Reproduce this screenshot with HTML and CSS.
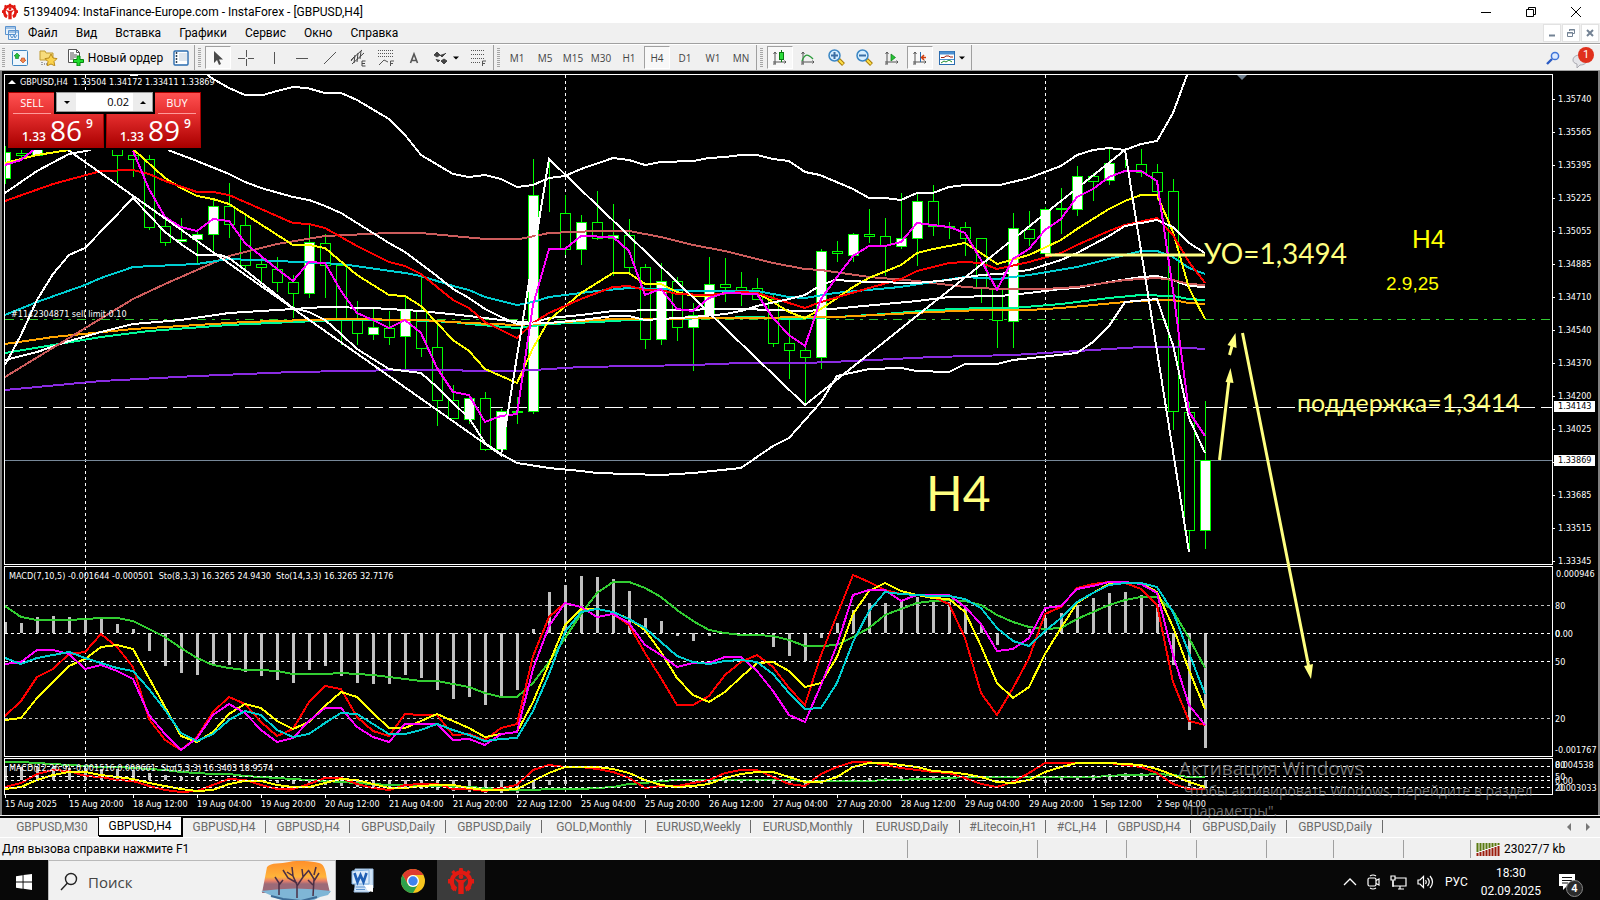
FILE: index.html
```html
<!DOCTYPE html>
<html lang="ru">
<head>
<meta charset="utf-8">
<title>51394094: InstaFinance-Europe.com - InstaForex - [GBPUSD,H4]</title>
<link rel="stylesheet" href="styles.css">
</head>
<body>
<svg class="defs" aria-hidden="true">
  <symbol id="gear" viewBox="0 0 24 24">
    <g fill="currentColor">
      <path d="M10.500 0h3l.6 3h-4.200zM3 3.600l2.400-1.800 2.400 2.700-2.700 2zM21 3.600l-2.400-1.800-2.400 2.700 2.700 2zM0 10.200h3.500v4H0zM24 10.200h-3.500v4H24zM2.400 18.500l2.600-2.200 2.500 2.800-2.400 2.400zM21.600 18.500L19 16.300l-2.500 2.800 2.400 2.400z"/>
      <path d="M12 2a10.500 10.500 0 0 0-4.800 19.800l1.200-4A6.500 6.500 0 0 1 5.500 12.500a6.500 6.500 0 0 1 13 0 6.500 6.500 0 0 1-2.900 5.300l1.200 4A10.500 10.500 0 0 0 12 2z"/>
      <circle cx="12" cy="8" r="2.200"/>
      <path d="M5.500 9.500l5 1.500h3l5-1.500-4 4.300V24h-5V13.800z"/>
    </g>
  </symbol>
  <symbol id="axes" viewBox="0 0 16 16"><path d="M3 2v12M1 12h13M1.500 4L3 2l1.500 2M12.500 10.500L14 12l-1.500 1.500M1 14h3" fill="none" stroke="#555"/></symbol>
</svg>

<header class="titlebar">
  <svg class="app-icon" viewBox="0 0 24 24"><use href="#gear"/></svg>
  <h1 class="title">51394094: InstaFinance-Europe.com - InstaForex - [GBPUSD,H4]</h1>
  <div class="window-controls">
    <button aria-label="Свернуть"><svg width="12" height="12"><path d="M1 6.500h10" stroke="#000"/></svg></button>
    <button aria-label="Восстановить"><svg width="12" height="12" fill="none" stroke="#000"><path d="M1.500 3.500h7v7h-7zM3.500 3.500v-2h7v7h-2"/></svg></button>
    <button aria-label="Закрыть"><svg width="12" height="12"><path d="M1 1l10 10M11 1L1 11" stroke="#000"/></svg></button>
  </div>
</header>

<nav class="menubar">
  <svg class="menu-icon" width="16" height="16" fill="#e8f2fb" stroke="#5a93cf"><path d="M1.500 1.500h10v8h-10zM4.500 5.500h10v9h-10z"/><path d="M1 3h10M5 7h10" stroke-width="1"/><path d="M6 10l2 3 2-3 1 3 2-3" fill="none"/></svg>
  <button>Файл</button><button>Вид</button><button>Вставка</button><button>Графики</button><button>Сервис</button><button>Окно</button><button>Справка</button>
  <div class="mdi-controls">
    <button aria-label="Свернуть окно"><svg width="10" height="10"><path d="M2 7.500h6" stroke="#738294" stroke-width="2"/></svg></button>
    <button aria-label="Восстановить окно"><svg width="10" height="10" fill="none" stroke="#738294"><path d="M1.500 4.500h5v4h-5zM3.500 3V1.500h5v4H7M1 5h6M3 2h6"/></svg></button>
    <button aria-label="Закрыть окно"><svg width="10" height="10"><path d="M2 2l6 6M8 2L2 8" stroke="#738294" stroke-width="2"/></svg></button>
  </div>
</nav>

<div class="toolbar">
  <div class="group group-first">
    <button aria-label="Новый график"><svg width="16" height="16"><rect x=".5" y=".5" width="15" height="15" rx="1" fill="#eef7fd" stroke="#3f86c0"/><path d="M5 3l3 3H6.500v2.500h-3V6H2z" fill="#25c43a" stroke="#0c7a1c" stroke-width=".6"/><path d="M11 13L8 10h1.500V8h3v2H14z" fill="#f08a4c" stroke="#c03c10" stroke-width=".6"/></svg></button>
    <button aria-label="Профили"><svg width="19" height="17"><path d="M1 2h5l1 2h7v7H1z" fill="#f7dc7c" stroke="#c19c33"/><path d="M3 13v3M5 15h4" stroke="#555" stroke-dasharray="1 1"/><path d="M12 5l2 4 4 .6-3 3 .8 4.200L12 15l-3.800 1.800.8-4.200-3-3L10 9z" fill="#fbd34d" stroke="#b98a1c"/></svg></button>
    <button class="new-order"><svg width="17" height="17"><path d="M1.500.5h8l3 3v10h-11z" fill="#fff" stroke="#555"/><path d="M9.500.5v3h3M3 4h4M3 6h7M3 8h6M3 10h4" fill="none" stroke="#555"/><path d="M10 7h3v3.500h3.500v3H13V17h-3v-3.500H6.500v-3H10z" fill="#1fdc2c" stroke="#07850f"/></svg>Новый ордер</button>
    <button class="narrow" aria-label="Обзор рынка"><svg width="16" height="16"><rect x="1" y="1" width="14" height="14" rx="1" fill="#fff" stroke="#2a6cb0" stroke-width="1.400"/><path d="M3.500 2v12" stroke="#345" stroke-width="1.500" stroke-dasharray="2 1"/><path d="M6 4h8M6 6h8M6 8h8M6 10h8" stroke="#bcd"/></svg></button>
  </div>
  <div class="group">
    <button class="pressed" aria-label="Курсор"><svg width="16" height="16"><path d="M4 1v12l3-3 2 5 2-1-2-4.500h4z" fill="#4a4a4a"/></svg></button>
    <button aria-label="Перекрестие"><svg width="16" height="16"><path d="M8.500 0v7M8.500 9v7M0 8.500h7M10 8.500h6" stroke="#555"/></svg></button>
    <button aria-label="Вертикальная линия"><svg width="16" height="16"><path d="M8.500 2v12" stroke="#555"/></svg></button>
    <button aria-label="Горизонтальная линия"><svg width="16" height="16"><path d="M2 8.500h12" stroke="#555"/></svg></button>
    <button aria-label="Трендовая линия"><svg width="16" height="16"><path d="M2 14L14 2" stroke="#555"/></svg></button>
    <button aria-label="Канал"><svg width="17" height="18"><path d="M1 11L12 1M2 15L14 4M4 14l1-8M7 13l1-9M10 10l1-8M1 12l3-4" stroke="#444" fill="none"/><path d="M15.500 12h-3.500v5h3.500M12 14.500h3" fill="none" stroke="#444"/></svg></button>
    <button aria-label="Фибоначчи"><svg width="17" height="18"><path d="M0 1.500h16M0 4.500h16M0 7.500h16" stroke="#555" stroke-dasharray="1 1"/><path d="M1 16l5-5 4 2M12.500 17v-5H16M12.500 14.500H15" fill="none" stroke="#555"/></svg></button>
    <button aria-label="Текст"><svg width="16" height="16"><path d="M4.500 13L8 4l3.500 9M5.500 10.500h5" fill="none" stroke="#555" stroke-width="1.600"/></svg></button>
    <button class="wide" aria-label="Стрелки"><svg width="26" height="16"><path d="M1 5l3-3 3 3-3 2zM8 11l3-2 3 2-3 3zM3 9l2 3 2-2M7 5l2 2 4-4" fill="#444" stroke="#444"/><path d="M20 6.500h6l-3 3z" fill="#000"/></svg></button>
    <button aria-label="Уровни"><svg width="17" height="18"><path d="M1 1.500h14M1 5.500h14M1 9.500h14M1 13.500h9" stroke="#555" stroke-dasharray="1 1"/><path d="M12.500 17v-5H16M12.500 14.500H15" fill="none" stroke="#555"/></svg></button>
  </div>
  <div class="group timeframes">
    <button>M1</button><button>M5</button><button>M15</button><button>M30</button><button>H1</button><button class="pressed">H4</button><button>D1</button><button>W1</button><button>MN</button>
  </div>
  <div class="group">
    <button class="pressed" aria-label="Свечи"><svg width="16" height="16"><use href="#axes"/><path d="M9.500 0v12" stroke="#0a7a12"/><rect x="7.500" y="2.500" width="4" height="7" fill="#2bdc3a" stroke="#0a7a12"/></svg></button>
    <button aria-label="Линия"><svg width="16" height="16"><use href="#axes"/><path d="M2 11c3-8 6-7 11-2" fill="none" stroke="#2b9b3b" stroke-width="1.400"/></svg></button>
    <button aria-label="Увеличить"><svg width="17" height="17"><path d="M10 10l5.500 5.500" stroke="#a87c08" stroke-width="4"/><path d="M11 11l4 4" stroke="#ffe14a" stroke-width="2"/><circle cx="6.500" cy="6.500" r="5.500" fill="#d6efff" stroke="#3a86c4" stroke-width="1.500"/><path d="M3 6.500h7M6.500 3v7" stroke="#3a6fa4" stroke-width="2"/></svg></button>
    <button aria-label="Уменьшить"><svg width="17" height="17"><path d="M10 10l5.500 5.500" stroke="#a87c08" stroke-width="4"/><path d="M11 11l4 4" stroke="#ffe14a" stroke-width="2"/><circle cx="6.500" cy="6.500" r="5.500" fill="#d6efff" stroke="#3a86c4" stroke-width="1.500"/><path d="M3 6.500h7" stroke="#3a6fa4" stroke-width="2"/></svg></button>
    <button aria-label="Автопрокрутка"><svg width="16" height="16"><use href="#axes"/><path d="M7 4l4.500 3.500L7 11z" fill="#27c437" stroke="#0a7a12" stroke-width=".7"/></svg></button>
    <button class="pressed" aria-label="Сдвиг графика"><svg width="16" height="16"><use href="#axes"/><path d="M8.500 2v10" stroke="#2a6cb0"/><path d="M14 7.500H9.500M12 5L9.500 7.500 12 10" stroke="#d04010" fill="none" stroke-width="1.500"/></svg></button>
    <button class="wide" aria-label="Шаблоны"><svg width="26" height="16"><rect x=".5" y="1.500" width="15" height="13" fill="#fff" stroke="#2a6cb0"/><path d="M1 3h14" stroke="#4a8fd0" stroke-width="3"/><path d="M1 9.500h14" stroke="#4a8fd0"/><path d="M2 7.500h3l2-1.500h3l1 1h3" fill="none" stroke="#a02010"/><path d="M2 13l3-2 2 1 3-2 3 2" fill="none" stroke="#209030"/><path d="M20 6.500h6l-3 3z"/></svg></button>
  </div>
  <div class="toolbar-end">
    <button aria-label="Поиск"><svg width="14" height="14" fill="none"><circle cx="9" cy="5" r="3.600" stroke="#3f74d8" stroke-width="1.500" fill="#dceaff"/><path d="M6 8l-5 5" stroke="#2b5cc4" stroke-width="2.400"/></svg></button>
    <button class="chat" aria-label="Сообщения: 1"><svg width="16" height="15"><path d="M8 1c4 0 7 2 7 5s-3 5-7 5l-3 3v-4C2 9 1 8 1 6c0-3 3-5 7-5z" fill="#e4e4e8" stroke="#a9a9b0"/></svg><span class="count">1</span></button>
  </div>
</div>

<main class="chart">
  <svg class="plot" viewBox="4 74 1549 721" role="img" aria-label="График GBPUSD H4">
    <g id="plot" shape-rendering="crispEdges"></g>
    <g stroke="#ffff80" stroke-width="3" fill="#ffff80">
      <path d="M1045 255h160"/>
      <path d="M1219.500 460L1229 380M1229.500 355L1232 346M1242.500 333L1309 668"/>
      <path d="M1230.500 368l3 15-8-1zM1235.500 333l1 15-9-3zM1311 679l-7-13 9-2z" stroke="none"/>
    </g>
    <g class="notes">
      <text class="note-level" x="1204" y="264">УО=1,3494</text>
      <text class="note-support" x="1297" y="412">поддержка=1,3414</text>
      <text class="note-big" x="926" y="511">H4</text>
      <text class="note-frame" x="1412" y="248">H4</text>
      <text class="note-date" x="1386" y="290">2.9,25</text>
    </g>
    <path d="M1237 75h10l-5 5z" fill="#708090"/>
  </svg>

  <div class="axis">
    <ol class="prices">
      <li>1.35740</li><li>1.35565</li><li>1.35395</li><li>1.35225</li><li>1.35055</li><li>1.34885</li><li>1.34710</li><li>1.34540</li><li>1.34370</li><li>1.34200</li><li>1.34025</li><li class="hidden-price"></li><li>1.33685</li><li>1.33515</li><li>1.33345</li>
    </ol>
    <span class="tag tag-level">1.34143</span>
    <span class="tag tag-bid">1.33869</span>
    <span class="mark m1">0.000946</span><span class="mark m2">80</span><span class="mark m3">0.00</span><span class="mark m3">0</span><span class="mark m4">50</span><span class="mark m5">20</span><span class="mark m6">-0.001767</span>
    <span class="mark m7">0.004538</span><span class="mark m7">80</span><span class="mark m8">50</span><span class="mark m9">0.00</span><span class="mark m10">20</span><span class="mark m11">0.003033</span>
  </div>

  <ol class="times">
    <li>15 Aug 2025</li><li>15 Aug 20:00</li><li>18 Aug 12:00</li><li>19 Aug 04:00</li><li>19 Aug 20:00</li><li>20 Aug 12:00</li><li>21 Aug 04:00</li><li>21 Aug 20:00</li><li>22 Aug 12:00</li><li>25 Aug 04:00</li><li>25 Aug 20:00</li><li>26 Aug 12:00</li><li>27 Aug 04:00</li><li>27 Aug 20:00</li><li>28 Aug 12:00</li><li>29 Aug 04:00</li><li>29 Aug 20:00</li><li>1 Sep 12:00</li><li>2 Sep 04:00</li>
  </ol>

  <p class="caption caption-main"><svg class="tri" width="8" height="4"><path d="M0 4l4-4 4 4z" fill="#fff"/></svg>GBPUSD,H4 &nbsp;1.33504 1.34172 1.33411 1.33869</p>
  <p class="caption caption-order">#1142304871 sell limit 0.10</p>
  <p class="caption caption-macd">MACD(7,10,5) -0.001644 -0.000501 &nbsp;Sto(8,3,3) 16.3265 24.9430 &nbsp;Sto(14,3,3) 16.3265 32.7176</p>
  <p class="caption caption-macd2">MACD(12,26,9) -0.001516 0.000661 &nbsp;Sto(5,3,3) 16.3403 18.9574</p>

  <section class="trade" aria-label="Торговля">
    <button class="side sell"><span class="side-name">SELL</span><span class="quote"><small>1.33</small><b>86</b><sup>9</sup></span></button>
    <div class="volume"><button aria-label="Меньше"><svg width="6" height="3"><path d="M0 0h6L3 3z"/></svg></button><input aria-label="Объём" value="0.02"><button aria-label="Больше"><svg width="6" height="3"><path d="M0 3h6L3 0z"/></svg></button></div>
    <button class="side buy"><span class="side-name">BUY</span><span class="quote"><small>1.33</small><b>89</b><sup>9</sup></span></button>
  </section>
</main>

<nav class="tabs">
  <a href="#" class="t-m30">GBPUSD,M30</a><a href="#" class="t-h4 active">GBPUSD,H4</a><a href="#" class="t-h4">GBPUSD,H4</a><a href="#" class="t-h4">GBPUSD,H4</a><a href="#" class="t-daily">GBPUSD,Daily</a><a href="#" class="t-daily">GBPUSD,Daily</a><a href="#" class="t-gold">GOLD,Monthly</a><a href="#" class="t-weekly">EURUSD,Weekly</a><a href="#" class="t-monthly">EURUSD,Monthly</a><a href="#" class="t-daily">EURUSD,Daily</a><a href="#" class="t-h1">#Litecoin,H1</a><a href="#" class="t-cl">#CL,H4</a><a href="#" class="t-h4">GBPUSD,H4</a><a href="#" class="t-daily">GBPUSD,Daily</a><a href="#" class="t-daily">GBPUSD,Daily</a>
  <div class="tab-scroll"><button aria-label="Назад"><svg width="5" height="8"><path d="M4 0v8L0 4z" fill="#777"/></svg></button><button aria-label="Вперёд"><svg width="5" height="8"><path d="M0 0v8l4-4z" fill="#777"/></svg></button></div>
</nav>

<footer class="status">
  <span class="help">Для вызова справки нажмите F1</span>
  <span class="cell profile"></span><span class="cell date"></span><span class="cell"></span><span class="cell"></span><span class="cell low"></span><span class="cell"></span><span class="cell low"></span>
  <span class="cell traffic"><svg width="24" height="13"><path d="M1.500 0v9M4.500 0v8M7.500 0v7M10.500 0v6M13.500 0v5M16.500 0v4M19.500 0v3M22.500 0v2" stroke="#5a7a10" stroke-width="2"/><path d="M1.500 10v3M4.500 9v4M7.500 8v5M10.500 7v6M13.500 6v7M16.500 5v8M19.500 4v9M22.500 3v10" stroke="#9c1c0c" stroke-width="2"/></svg>23027/7 kb</span>
</footer>

<div class="taskbar">
  <button class="start" aria-label="Пуск"><svg width="16" height="16" fill="#fff"><path d="M0 2.200l6.600-.9v6.200H0zM7.500 1.100L16 0v7.500H7.500zM0 8.400h6.600v6.300L0 13.800zM7.500 8.400H16V16l-8.500-1.200z"/></svg></button>
  <label class="search">
    <svg width="18" height="20" fill="none" stroke="#222" stroke-width="1.400"><circle cx="11" cy="7" r="5.500"/><path d="M7.500 11L1 18"/></svg>
    <input type="text" placeholder="Поиск">
    <svg class="scene" width="70" height="42" viewBox="0 0 70 42">
      <defs><linearGradient id="sky" x2="0" y2="1"><stop offset="0" stop-color="#ff8f2a"/><stop offset=".5" stop-color="#ffb43a"/><stop offset=".62" stop-color="#e8806a"/><stop offset=".72" stop-color="#9c6a78"/></linearGradient></defs>
      <path d="M6 6C10 1 20 3 28 1s22-1 30 1c6 1 7 10 8 17l3 13H1z" fill="url(#sky)"/>
      <path d="M0 30q35-5 70 0l-3 4-8 2-8 4-20 1-14-3-8-4z" fill="#7fb6d6"/>
      <path d="M10 35l12 3 18 2 16-4" stroke="#3d6c96" stroke-width="2" fill="none"/>
      <path d="M36 37V24l-4-9-6-4M32 15l-1-9M36 25l6-9 6-7M42 16l-1-8M36 22L27 17l-5-8M18 34V22l-4-6M18 24l4-5M52 35l1-17-5-8M53 20l5-8M52 24l-5-5M53 14l2-8" stroke="#4b2f45" stroke-width="1.500" fill="none"/>
    </svg>
  </label>
  <button class="app word" aria-label="Word"><svg width="24" height="26"><path d="M4 1h18v19l-4 4H3l1-5z" fill="#cfe3f7" stroke="#9fc2e6"/><path d="M1 3l17-1v14H1z" fill="#dcebfa" stroke="#7fb0e0"/><path d="M3.500 5l3 9L9.500 7l3 7 3-9" fill="none" stroke="#1f5fb4" stroke-width="2.600"/><path d="M5 19h11M5 21.500h9" stroke="#5c93cf"/><path d="M13 17h9v7l-5-1z" fill="#fff"/></svg></button>
  <button class="app chrome" aria-label="Chrome"><svg width="24" height="26" viewBox="0 0 24 24"><circle cx="12" cy="12" r="12" fill="#f7c51e"/><path d="M1.600 6A12 12 0 0 1 22.400 6H12a6 6 0 0 0-5.200 9z" fill="#df3b2f"/><path d="M1.600 6A12 12 0 0 0 12 24l5.200-9A6 6 0 0 1 6.800 15z" fill="#2da04c"/><circle cx="12" cy="12" r="6" fill="#fff"/><circle cx="12" cy="12" r="4.700" fill="#3f82ee"/></svg></button>
  <button class="app current" aria-label="InstaForex"><svg width="26" height="28" viewBox="0 0 24 24"><use href="#gear"/></svg></button>
  <div class="tray">
    <button aria-label="Скрытые значки"><svg width="14" height="8"><path d="M1 7l6-6 6 6" fill="none" stroke="#fff" stroke-width="1.300"/></svg></button>
    <button aria-label="Камера"><svg width="13" height="16" fill="none" stroke="#fff" stroke-width="1.200"><rect x="1" y="4" width="8" height="8" rx="1.500"/><path d="M9 6.500l3-1.500v6L9 9.500M3 2q3-2 6 0M3 14q3 2 6 0"/></svg></button>
    <button aria-label="Сеть"><svg width="17" height="15" fill="none" stroke="#fff" stroke-width="1.200"><path d="M5 3h11v8H3V6M8 14h6M10 11v3"/><path d="M1 1h4v4H1zM3 5v7"/></svg></button>
    <button aria-label="Громкость"><svg width="17" height="14" fill="none" stroke="#fff" stroke-width="1.200"><path d="M1 5h2l3.500-3.500v11L3 9H1zM8.500 5q1.500 2 0 4M10.500 3q3.500 4 0 8M13 1q5 6 0 12"/></svg></button>
    <span class="lang">РУС</span>
    <time class="clock"><span>18:30</span><span>02.09.2025</span></time>
    <button class="notify" aria-label="Уведомления: 4"><svg width="17" height="17"><path d="M0 0h16v12H8l-4 4v-4H0z" fill="#fff"/><path d="M3 3.500h10M3 6.500h10M3 9h6" stroke="#111"/></svg><span class="badge">4</span></button>
  </div>
</div>

<aside class="watermark"><strong>Активация Windows</strong><span>Чтобы активировать Windows, перейдите в раздел "Параметры".</span></aside>
<script src="chart.js"></script>
</body>
</html>
```

FILE: styles.css
```css
* { box-sizing: border-box; }
body { margin: 0; min-height: 100vh; display: flex; flex-direction: column; background: #f0f0f0; color: #000; font: 12px/16px Roboto, "Open Sans", "Noto Sans", sans-serif; position: relative; overflow-x: hidden; }
button { border: 0; background: none; padding: 0; margin: 0; font: inherit; color: inherit; display: flex; align-items: center; justify-content: center; }
ol, p, h1 { margin: 0; padding: 0; list-style: none; }
svg { display: block; flex: none; }
.defs { position: absolute; width: 0; height: 0; }

.titlebar { display: flex; align-items: center; height: 23px; background: #fff; padding-left: 2px; }
.app-icon { width: 16px; height: 17px; color: #e21a12; }
.title { font-size: 12px; font-weight: 400; margin-left: 5px; }
.window-controls { margin-left: auto; margin-right: 2px; display: flex; }
.window-controls button { width: 45px; height: 20px; }

.menubar { display: flex; align-items: center; height: 21px; border-bottom: 1px solid #a0a0a0; padding: 0 1px 0 4px; }
.menu-icon { margin-right: 8px; }
.menubar > button { margin-right: 18px; }
.mdi-controls { margin-left: auto; display: flex; gap: 1px; }
.mdi-controls button { width: 18px; height: 18px; background: #fff; border: 1px solid #e2e2e2; }

.toolbar { display: flex; align-items: center; height: 27px; border-top: 1px solid #fff; border-bottom: 1px solid #a0a0a0; }
.group { display: flex; align-items: center; height: 25px; border-right: 1px solid #a0a0a0; padding-right: 1px; }
.group::before { content: ""; width: 3px; height: 19px; margin: 0 3px; background: repeating-linear-gradient(#a6a6a6 0 1px, #f0f0f0 1px 2px); }
.group-first::before { margin: 0 1px 0 2px; }
.group button { width: 28px; height: 23px; }
.group .wide { width: 36px; }
.group .narrow { width: 25px; }
.group .new-order { width: 106px; gap: 4px; white-space: nowrap; }
.group .pressed { background: #f8f8f8; border: 1px solid; border-color: #a0a0a0 #fff #fff #a0a0a0; width: 26px; margin: 0 1px; }
.timeframes { font-family: "Open Sans", sans-serif; font-size: 10px; color: #444; }
.toolbar-end { margin-left: auto; display: flex; align-items: center; gap: 12px; padding-right: 6px; }
.chat { position: relative; width: 22px; height: 22px; justify-content: flex-start; align-items: flex-end; }
.count { position: absolute; right: 0; top: 0; width: 16px; height: 16px; border-radius: 50%; background: #e0301c; color: #fff; font-size: 11px; line-height: 16px; text-align: center; }

.chart { position: relative; display: grid; grid-template-columns: 1fr 45px; background: #000; color: #fff; padding: 3px 0 0 2px; border: 0 solid #808080; border-width: 0 2px 0 2px; font: 9px/12px "DejaVu Sans Condensed", "Open Sans", sans-serif; }
.plot { width: 100%; height: auto; }
.axis { position: relative; }
.prices { padding-top: 9px; }
.prices li { height: 33px; line-height: 33px; padding-left: 5px; position: relative; }
.prices li::before { content: ""; position: absolute; left: 0; top: 16px; width: 2px; height: 1px; background: #fff; }
.tag { position: absolute; left: 1px; right: 3px; height: 11px; line-height: 11px; padding-left: 4px; background: #fff; color: #000; }
.tag-level { top: 327px; }
.tag-bid { top: 381px; }
.mark { position: absolute; left: 2px; white-space: nowrap; }
.m1 { top: 494px; left: 3px; }
.m2 { top: 526px; }
.m3 { top: 554px; }
.m4 { top: 582px; }
.m5 { top: 639px; }
.m6 { top: 670px; }
.m7 { top: 685px; }
.m8 { top: 697px; }
.m9 { top: 701px; }
.m10 { top: 708px; }
.m11 { top: 708px; left: 5px; }
.times { grid-column: 1 / -1; display: flex; height: 20px; padding-left: 1px; }
.times li { flex: 0 0 64px; position: relative; padding-top: 3px; white-space: nowrap; }
.times li::before { content: ""; position: absolute; left: 0; top: 0; width: 1px; height: 3px; background: #fff; }

.caption { position: absolute; white-space: pre; }
.caption-main { left: 6px; top: 5px; display: flex; align-items: center; gap: 4px; }
.caption-order { left: 9px; top: 237px; }
.caption-macd { left: 7px; top: 499px; }
.caption-macd2 { left: 7px; top: 691px; }

.notes text { fill: #ffff80; font-family: Lato, "Open Sans", sans-serif; }
.notes .note-level { font-size: 28px; }
.notes .note-support { font-size: 25px; }
.notes .note-big { font-size: 48px; }
.notes .note-frame { font-family: "Liberation Sans", sans-serif; fill: #ff0; font-size: 26px; }
.notes .note-date { font-family: "Liberation Sans", sans-serif; fill: #ff0; font-size: 19px; }

.trade { position: absolute; left: 6px; top: 21px; width: 193px; height: 58px; background: #000; font-family: "Open Sans", sans-serif; }
.side { position: absolute; top: 0; display: block; height: 56px; width: 96px; color: #fff; background: linear-gradient(#ff5050, #e02a2a 45%, #aa0000); border: 1px solid #a80000; }
.sell { left: 0; clip-path: polygon(0 0, 46px 0, 46px 22px, 100% 22px, 100% 100%, 0 100%); }
.buy { right: 0; width: 95px; clip-path: polygon(49px 0, 100% 0, 100% 100%, 0 100%, 0 22px, 49px 22px); }
.side-name { position: absolute; top: 2px; left: 4px; width: 38px; height: 19px; border-bottom: 1px solid #ff9a9a; font-size: 11px; line-height: 16px; }
.buy .side-name { left: auto; right: 4px; }
.quote { position: absolute; left: 13px; bottom: 2px; display: flex; align-items: flex-end; }
.quote small { font-size: 12px; line-height: 16px; font-weight: 600; margin-right: 4px; }
.quote b { font-size: 28px; line-height: 30px; font-weight: 400; }
.quote sup { font-size: 12px; line-height: 12px; font-weight: 600; margin: 0 0 15px 4px; }
.volume { position: absolute; left: 48px; top: 0; width: 97px; height: 20px; display: flex; border: 1px solid #9a9a9a; background: #fff; z-index: 1; }
.volume button { width: 19px; background: #ececec; }
.volume input { flex: 1; min-width: 0; border: 0; padding: 0 4px 0 0; text-align: right; font: 11px/18px "Open Sans", sans-serif; color: #000; }

.tabs { display: flex; align-items: flex-start; height: 22px; margin-top: 1px; border-top: 2px solid #000; border-bottom: 1px solid #fff; padding-left: 2px; }
.tabs a { color: #6b6b6b; text-decoration: none; text-align: center; line-height: 18px; white-space: nowrap; position: relative; }
.tabs a::after { content: ""; position: absolute; right: 0; top: 2px; height: 13px; width: 1px; background: #6b6b6b; }
.tabs .t-m30 { width: 96px; padding-left: 4px; }
.tabs .t-h4 { width: 84px; }
.tabs .t-daily { width: 96px; }
.tabs .t-gold { width: 104px; }
.tabs .t-weekly { width: 105px; }
.tabs .t-monthly { width: 113px; }
.tabs .t-h1 { width: 86px; }
.tabs .t-cl { width: 61px; }
.tabs .active { background: #fff; color: #000; border: 1px solid #000; border-top: 0; height: 19px; margin-top: -1px; line-height: 19px; box-shadow: 1px 1px 0 #000; }
.tabs .t-m30::after, .tabs .active::after { display: none; }
.tab-scroll { margin-left: auto; display: flex; gap: 14px; padding: 5px 9px 0 0; }

.status { display: flex; align-items: center; height: 22px; padding-left: 2px; white-space: nowrap; }
.help { flex: 1; }
.cell { border-left: 1px solid #a0a0a0; height: 18px; width: 70px; }
.cell.low { width: 67px; }
.cell.profile { width: 130px; }
.cell.date { width: 89px; }
.cell.traffic { width: 130px; display: flex; align-items: center; gap: 4px; padding-left: 5px; }

.taskbar { flex: 1 0 40px; display: flex; align-items: stretch; background: #080808; color: #fff; }
.start { width: 48px; }
.search { display: flex; align-items: center; width: 288px; background: #f1f1f1; border: 1px solid #b9b9b9; color: #333; padding-left: 11px; overflow: hidden; }
.search input { flex: 1; min-width: 0; border: 0; background: none; padding: 0 0 0 10px; font: 15px/20px "Open Sans", sans-serif; }
.search input::placeholder { color: #444; opacity: 1; }
.scene { margin-right: 4px; }
.app { border-bottom: 3px solid #76b9ed; }
.word { width: 42px; margin-left: 6px; }
.chrome { width: 42px; margin: 0 3px 0 8px; }
.current { width: 48px; background: #3b3b3b; color: #e21a12; }
.tray { margin-left: auto; display: flex; align-items: center; gap: 10px; padding-right: 24px; }
.lang { font-size: 12px; margin: 0 3px 0 1px; }
.clock { display: flex; flex-direction: column; align-items: center; line-height: 18px; }
.notify { position: relative; margin-left: 8px; }
.badge { position: absolute; left: 7px; top: 6px; width: 17px; height: 17px; border: 1px solid #888; border-radius: 50%; background: #2b2b2b; font-size: 11px; line-height: 15px; font-weight: 600; text-align: center; }

.watermark { position: absolute; left: 1179px; right: 40px; top: 755px; color: rgba(150, 150, 150, .75); pointer-events: none; font: 14px/20px "Open Sans", sans-serif; }
.watermark strong { display: block; font-weight: 400; font-size: 19px; line-height: 26px; }
.watermark span { display: block; width: 372px; padding-left: 5px; }
```

FILE: chart.js
```js
const root = document.getElementById('plot');
const NS = 'http://www.w3.org/2000/svg';
const STEP = 16, LEFT = 5;

function add(tag, attrs) {
  const node = document.createElementNS(NS, tag);
  for (const name in attrs) node.setAttribute(name, attrs[name]);
  root.appendChild(node);
}
function line(color, points) {
  add('polyline', { points, fill: 'none', stroke: color, 'stroke-width': 2 });
}
function series(color, ys) {
  line(color, ys.split(' ').map((y, i) => (LEFT + STEP * i) + ',' + y).join(' '));
}
function rule(d, color, dash) {
  add('path', { d, stroke: color, fill: 'none', 'stroke-dasharray': dash });
}

rule('M85.5 75V794M565.5 75V794M1045.5 75V794', '#fff', '3 3');
rule('M5 319.5H1552', '#32cd32', '9 6 3 6');
rule('M5 407.5H1552', '#fff', '18 6');
rule('M5 460.5H1552', '#778899', 'none');

// index, open/close top, bottom, high, low, rising (1) or falling (0)
const candles = `0 152 178 146 184 1|1 153 155 150 160 0|2 146 155 146 156 1|7 146 155 146 183 0|8 155 159 150 177 0|9 159 227 155 230 0
10 226 242 217 246 0|11 239 241 218 242 1|12 234 239 231 263 1|13 206 234 198 251 1|14 206 224 183 238 0|15 225 265 214 272 0
16 264 267 257 284 0|17 269 282 257 292 0|18 282 293 275 318 0|19 242 293 225 298 1|20 243 265 234 298 0|21 265 319 265 345 0
22 320 333 301 345 0|23 327 334 308 340 1|24 328 337 311 345 0|25 310 336 296 370 1|26 311 348 276 357 0|27 347 400 320 426 0
28 400 418 385 419 0|29 398 419 397 424 1|30 398 449 392 451 0|31 411 449 409 455 1|32 411 412 397 424 0|33 195 411 159 414 1
34 194 194 160 212 0|35 213 249 195 255 0|36 222 249 215 265 1|37 222 238 191 240 0|38 235 238 204 276 1|39 235 267 219 272 0
40 267 339 264 349 0|41 281 339 263 345 1|42 281 327 277 341 0|43 315 327 303 371 1|44 284 315 257 316 1|45 284 287 258 302 0
46 287 290 272 306 0|47 288 299 278 300 0|48 299 343 293 347 0|49 343 350 320 379 0|50 350 357 346 405 0|51 251 357 249 369 1
52 251 253 241 262 0|53 234 255 233 262 1|54 234 236 209 243 0|55 236 245 218 276 0|56 238 246 193 249 1|57 201 238 194 266 1
58 201 226 185 236 0|59 226 227 222 239 0|60 227 238 222 256 0|61 238 288 238 303 0|62 289 320 285 348 0|63 228 321 213 348 1
64 229 238 211 246 0|65 209 253 207 254 1|66 208 209 188 234 0|67 176 209 166 216 1|68 176 181 173 201 0|69 163 180 149 185 1
70 163 163 149 168 0|71 164 172 149 177 0|72 172 191 164 200 0|73 191 411 179 430 0|74 412 530 402 552 0|75 460 530 401 549 1`;
candles.split(/[|\n]/).forEach(row => {
  const [i, top, bottom, high, low, up] = row.split(' ').map(Number);
  const x = LEFT + STEP * i;
  rule(`M${x + .5} ${high}V${low}`, '#0f0', 'none');
  const left = Math.max(x - 5, 5);
  add('rect', { x: left + .5, y: top + .5, width: x + 5 - left, height: bottom - top, fill: up ? '#fff' : '#000', stroke: '#0f0' });
});

line('#8a2be2', '5,390 101,381 197,376 293,372 405,370 517,371 581,367 693,365 741,363 805,363 853,361 933,357 1013,355 1061,352 1109,349 1141,347 1173,347 1205,349');
line('#00fa9a', '5,353 53,345 101,337 149,331 229,325 293,322 341,320 405,320 453,322 469,324 517,328 549,324 597,322 629,320 757,317 789,319 837,317 885,314 933,310 981,308 1013,308 1061,304 1109,298 1141,295 1173,296 1189,299 1205,300');
line('#ffa500', '5,344 53,337 133,329 245,322 341,319 421,320 469,323 517,325 549,323 613,319 645,319 725,318 837,317 933,312 981,310 1029,310 1061,308 1093,305 1125,302 1157,300 1173,300 1189,303 1205,304');
line('#fff', '5,360 37,352 69,341 101,332 133,324 181,320 229,313 277,310 325,307 373,308 421,311 469,316 501,320 533,323 549,318 581,315 613,311 661,310 741,309 805,311 821,310 853,307 885,304 917,301 949,297 1000,296 1029,293 1061,289 1077,288 1109,282 1141,277 1157,276 1173,280 1189,286 1205,287');
line('#cd5c5c', '5,377 133,299 165,284 229,256 277,244 325,236 389,233 421,233 485,239 520,239 549,233 597,231 629,231 661,237 693,245 725,251 773,263 805,269 821,270 869,277 917,281 965,287 997,289 1045,289 1077,287 1125,280 1157,278 1173,280 1189,284 1205,285');
line('#00ced1', '5,315 37,302 85,285 101,278 133,267 197,264 229,259 277,261 341,264 405,273 421,276 453,286 469,290 485,297 517,305 533,302 549,297 597,291 629,288 661,289 693,291 757,291 789,297 805,298 835,293 900,287 965,277 997,279 1029,275 1077,267 1109,259 1141,251 1157,251 1173,257 1189,268 1205,274');
line('#fff', '130,75 138,75');
line('#fff', '207,75 215,80 229,88 245,95 263,95 277,91 293,87 307,88 325,93 341,93 357,100 389,119 405,135 421,155 453,174 469,177 485,175 501,179 517,187 533,185 549,178 565,176 581,169 613,158 629,160 645,165 661,162 693,161 709,158 725,157 741,155 757,155 773,159 789,161 805,172 820,175 853,189 869,198 885,198 901,200 917,193 933,193 949,187 965,185 1000,185 1029,178 1061,166 1077,155 1093,150 1109,148 1125,150 1141,144 1157,141 1173,113 1187,75');
line('#fff', '5,365 21,335 37,300 53,274 69,255 85,248 133,198 165,232 181,244 197,255 220,255 229,258 245,270 293,308 309,312 325,320 341,334 357,349 389,369 421,373 437,387 453,403 469,418 485,443 501,454 517,463 549,468 581,471 597,473 661,475 693,473 741,468 757,457 773,446 789,438 805,420 821,402 837,376 869,369 901,368 917,371 949,372 965,364 997,364 1013,360 1077,353 1093,342 1109,326 1125,302 1157,299 1173,345 1189,418 1205,453');
line('#ff0', '5,163 37,155 69,150 85,146 117,143 133,149 165,178 181,188 197,196 213,199 229,204 293,245 309,245 325,248 357,275 389,295 405,296 421,306 453,340 469,351 485,369 517,383 533,348 549,320 581,293 613,273 629,273 645,284 661,284 677,292 693,296 709,296 725,293 757,293 773,302 789,312 805,318 821,309 853,287 869,278 901,265 917,253 933,249 965,243 981,253 997,264 1029,255 1061,240 1077,229 1109,209 1125,201 1141,195 1157,195 1173,232 1189,288 1205,319');
line('#f00', '5,201 53,184 101,171 133,170 149,174 165,181 197,192 213,192 229,195 293,223 309,224 325,228 357,246 389,262 405,266 421,274 453,300 469,308 485,322 517,338 533,323 549,313 581,299 613,287 629,286 645,290 661,290 677,294 709,295 741,292 757,293 789,303 805,308 821,302 869,288 901,279 917,271 949,263 965,262 981,263 997,269 1029,262 1061,253 1077,245 1109,231 1125,225 1157,218 1173,235 1189,262 1205,283');
line('#fff', '5,193 37,171 69,154 91,150');
line('#fff', '168,150 197,161 229,174 245,182 261,188 293,197 309,200 325,206 341,213 357,223 389,243 405,252 421,264 437,276 453,289 469,298 485,309 501,317 517,324 549,323 581,320 613,316 629,316 645,320 693,317 725,314 741,311 757,306 789,299 805,295 821,285 835,280 869,282 917,283 949,280 981,275 1000,274 1029,270 1061,260 1077,253 1109,236 1125,226 1157,220 1173,227 1189,243 1205,253');
line('#f0f', '5,165 21,160 37,147');
line('#f0f', '133,151 149,189 165,217 181,227 197,231 213,219 229,221 245,243 261,256 277,269 293,281 309,262 325,263 341,291 357,313 373,320 389,328 405,320 421,333 437,368 453,392 469,395 485,422 501,416 517,414 533,305 549,249 565,249 581,236 613,237 629,251 645,295 661,289 677,309 693,311 709,298 725,293 757,294 773,318 789,335 805,346 821,299 837,277 853,256 869,246 885,246 901,242 917,223 949,227 965,233 981,260 997,290 1013,259 1029,249 1045,230 1061,219 1077,197 1093,189 1109,177 1125,171 1141,171 1157,181 1173,290 1189,412 1205,436');
line('#fff', '68,150 501,455 549,159 805,405 1125,150 1189,552');

// Oscillator pane
rule('M5 605.5H1552M5 718.5H1552', '#c0c0c0', '3 3');
const bars = '622 623 617 616 617 619 618 624 629 651 666 673 675 666 665 672 676 680 683 670 666 676 683 684 684 675 678 690 699 697 705 696 690 629 592 585 576 577 579 591 618 621 636 641 636 633 633 633 647 656 661 638 623 610 603 603 601 597 600 602 608 625 645 632 629 618 613 605 598 593 592 595 604 665 730 748';
const smallBars = '767 767 767 767 768 768 769 769 770 773 775 777 777 779 779 781 782 783 784 784 785 786 787 788 789 789 789 790 791 792 793 793 793 789 785 784 782 781 779 779 779 779 780 782 783 783 783 783 784 785 785 784 781 779 778 778 777 776 776 777 779 781 783 782 781 783 777 776 775 774 773 773 776 782 786 788';
function histogram(list, zero) {
  const d = list.split(' ').map((y, i) => `M${LEFT + STEP * i + .5} ${zero}V${y}`).join('');
  add('path', { d, stroke: '#c0c0c0', 'stroke-width': 3 });
}
histogram(bars, 633);
rule('M5 633.5H1552M5 661.5H1552', '#fff', '3 3');
series('#32cd32', '606 617 620 620 620 619 618 618 621 629 637 648 658 665 668 670 670 671 674 674 674 673 674 675 677 679 681 681 684 687 693 697 697 683 662 638 614 593 582 582 588 597 610 621 630 633 635 635 636 640 646 646 645 637 628 615 609 603 601 600 601 605 615 622 627 629 628 619 612 605 600 597 597 611 638 668');
series('#f00', '716 701 677 669 654 652 634 647 667 719 740 750 737 712 697 704 722 736 729 702 686 689 717 731 736 714 715 715 735 734 740 728 724 656 617 603 607 617 614 625 653 678 705 705 696 675 662 655 667 688 705 655 615 575 582 590 594 595 597 604 638 693 715 688 658 614 607 588 584 582 583 589 605 682 721 725');
series('#ff0', '720 718 698 682 666 659 647 645 649 678 707 736 742 732 714 704 708 721 729 722 706 692 697 713 728 728 721 714 721 728 737 734 732 702 664 625 609 609 612 619 630 652 678 695 702 692 677 663 662 671 687 683 657 614 591 583 591 595 598 599 612 646 683 698 687 654 628 603 593 584 583 583 592 627 670 709');
series('#f0f', '664 662 650 650 654 669 665 671 679 715 734 750 738 715 704 713 730 742 738 721 708 708 727 737 742 724 724 724 740 739 745 734 732 669 626 603 607 617 614 623 645 655 667 663 663 657 657 671 691 715 722 685 645 595 590 590 601 595 595 595 607 624 651 649 638 608 606 589 586 582 582 584 593 655 705 725');
series('#00ced1', '658 664 658 655 652 658 663 668 671 689 710 733 741 734 720 711 715 730 737 734 723 713 714 724 734 734 730 724 730 735 741 739 738 711 674 632 612 609 612 619 628 642 656 662 664 661 660 662 674 693 709 708 683 642 611 592 594 595 596 596 599 608 628 641 646 631 618 602 593 585 583 583 587 612 653 694');

// Lower pane
histogram(smallBars, 780);
series('#32cd32', '762 762 763 764 765 766 767 767 768 769 770 772 773 774 774 776 777 778 779 780 781 782 783 784 785 785 786 786 787 787 788 789 790 790 789 789 789 788 787 784 783 781 780 780 780 780 780 780 780 780 781 781 781 781 781 780 780 779 779 778 777 777 777 777 777 777 777 777 777 776 775 775 774 775 777 777');
series('#f00', '787 783 774 770 771 776 777 780 781 786 790 792 791 785 779 780 785 789 789 784 778 778 784 788 790 785 784 784 789 789 791 788 785 770 765 767 767 769 772 778 788 786 786 783 780 773 770 770 777 784 786 774 767 762 762 765 768 770 772 773 778 784 787 782 773 763 763 763 763 763 765 767 773 784 789 789');
series('#ff0', '789 787 780 775 772 772 775 777 779 783 786 789 791 790 784 781 781 785 787 787 783 779 780 784 788 788 786 785 785 788 790 790 789 781 773 767 767 767 769 773 780 785 787 786 784 778 774 772 772 777 782 782 777 767 763 763 765 767 771 772 774 777 782 783 780 772 767 763 763 763 764 765 769 775 782 787');
rule('M5 766.5H1552M5 776.5H1552M5 780.5H1552M5 787.5H1552', '#fff', '3 3');

rule('M4.5 74.5H1552.5V564.5H4.5ZM4.5 566.5H1552.5V756.5H4.5ZM4.5 758.5H1552.5V794.5H4.5Z', '#fff', 'none');
```
